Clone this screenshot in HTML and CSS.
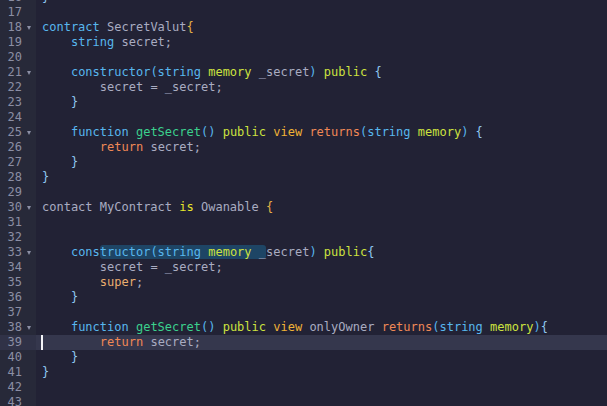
FILE: index.html
```html
<!DOCTYPE html>
<html>
<head>
<meta charset="utf-8">
<link rel="stylesheet" href="styles.css">
</head>
<body>
<div class="editor">
  <div class="gutter">
    <div class="gl">16</div>
    <div class="gl">17</div>
    <div class="gl fold">18</div>
    <div class="gl">19</div>
    <div class="gl">20</div>
    <div class="gl fold">21</div>
    <div class="gl">22</div>
    <div class="gl">23</div>
    <div class="gl">24</div>
    <div class="gl fold">25</div>
    <div class="gl">26</div>
    <div class="gl">27</div>
    <div class="gl">28</div>
    <div class="gl">29</div>
    <div class="gl fold">30</div>
    <div class="gl">31</div>
    <div class="gl">32</div>
    <div class="gl fold">33</div>
    <div class="gl">34</div>
    <div class="gl">35</div>
    <div class="gl">36</div>
    <div class="gl">37</div>
    <div class="gl fold">38</div>
    <div class="gl active">39</div>
    <div class="gl">40</div>
    <div class="gl">41</div>
    <div class="gl">42</div>
    <div class="gl">43</div>
  </div>
  <div class="code">
    <div class="ln"><span class="br">}</span></div>
    <div class="ln"></div>
    <div class="ln"><span class="kw">contract</span> <span class="id">SecretValut</span><span class="bro">{</span></div>
    <div class="ln">    <span class="kw">string</span> <span class="id">secret;</span></div>
    <div class="ln"></div>
    <div class="ln">    <span class="kw">constructor(string</span> <span class="yg">memory</span> <span class="id">_secret</span><span class="kw">)</span> <span class="yg">public</span> <span class="br">{</span></div>
    <div class="ln"><span class="ind">    </span>    <span class="id">secret = _secret;</span></div>
    <div class="ln">    <span class="br">}</span></div>
    <div class="ln"></div>
    <div class="ln">    <span class="kw">function</span> <span class="fn">getSecret</span><span class="kw">()</span> <span class="yg">public</span> <span class="vw">view</span> <span class="rt">returns</span><span class="kw">(string</span> <span class="yg">memory</span><span class="kw">)</span> <span class="br">{</span></div>
    <div class="ln"><span class="ind">    </span>    <span class="rt">return</span> <span class="id">secret;</span></div>
    <div class="ln">    <span class="br">}</span></div>
    <div class="ln"><span class="br">}</span></div>
    <div class="ln"></div>
    <div class="ln"><span class="id">contact MyContract</span> <span class="is">is</span> <span class="id">Owanable</span> <span class="bro">{</span></div>
    <div class="ln"></div>
    <div class="ln"></div>
    <div class="ln">    <span class="kw">cons</span><span class="sel"><span class="kw">tructor(string</span> <span class="yg">memory</span> <span class="id">_</span></span><span class="id">secret</span><span class="kw">)</span> <span class="yg">public</span><span class="br">{</span></div>
    <div class="ln"><span class="ind">    </span>    <span class="id">secret = _secret;</span></div>
    <div class="ln"><span class="ind">    </span>    <span class="sp">super</span><span class="id">;</span></div>
    <div class="ln">    <span class="br">}</span></div>
    <div class="ln"></div>
    <div class="ln">    <span class="kw">function</span> <span class="fn">getSecret</span><span class="kw">()</span> <span class="yg">public</span> <span class="vw">view</span> <span class="id">onlyOwner</span> <span class="rt">returns</span><span class="kw">(string</span> <span class="yg">memory</span><span class="kw">)</span><span class="br">{</span></div>
    <div class="ln active"><span class="cursor"></span><span class="ind">    </span>    <span class="rt">return</span> <span class="id">secret;</span></div>
    <div class="ln">    <span class="br">}</span></div>
    <div class="ln"><span class="br">}</span></div>
    <div class="ln"></div>
    <div class="ln"></div>
  </div>
</div>
</body>
</html>
```

FILE: styles.css
```css
html, body {
  margin: 0;
  padding: 0;
  background: #222235;
  overflow: hidden;
}

.editor {
  display: flex;
  margin-top: -10.5px;
  width: 607px;
  height: 420px;
  font-family: "DejaVu Sans Mono", monospace;
  font-size: 12px;
  line-height: 15px;
}

.gutter {
  width: 36px;
  flex: none;
  background: #272939;
  color: #8b8ea4;
}

.gl {
  height: 15px;
  padding-right: 14px;
  text-align: right;
  position: relative;
}

.gl.active {
  background: #303247;
}

.gl.fold::after {
  content: "";
  position: absolute;
  left: 27px;
  top: 6px;
  border-left: 2.5px solid transparent;
  border-right: 2.5px solid transparent;
  border-top: 4px solid #8b8ea4;
}

.code {
  flex: 1;
  padding-left: 6px;
  color: #a9acc1;
}

.ln {
  height: 15px;
  white-space: pre;
  position: relative;
}

.ln.active {
  background: #35374d;
  margin-left: -6px;
  padding-left: 6px;
}

.cursor {
  position: absolute;
  left: 5px;
  top: 0;
  width: 2px;
  height: 15px;
  background: #f4f4f8;
}

.ind {
  background-image: linear-gradient(#555870 50%, transparent 50%);
  background-size: 1px 2px;
  background-repeat: repeat-y;
  background-position: 29px 0;
}

.kw { color: #58b7ee; }
.id { color: #a9acc1; }
.fn { color: #3bd08d; }
.yg { color: #cde23f; }
.vw { color: #f1b335; }
.rt { color: #f08856; }
.sp { color: #eaae6f; }
.is { color: #e6e62a; }
.br { color: #90c8f2; }
.bro { color: #e7b245; }

.sel {
  background: #1e4565;
  border-radius: 3px;
}
```
